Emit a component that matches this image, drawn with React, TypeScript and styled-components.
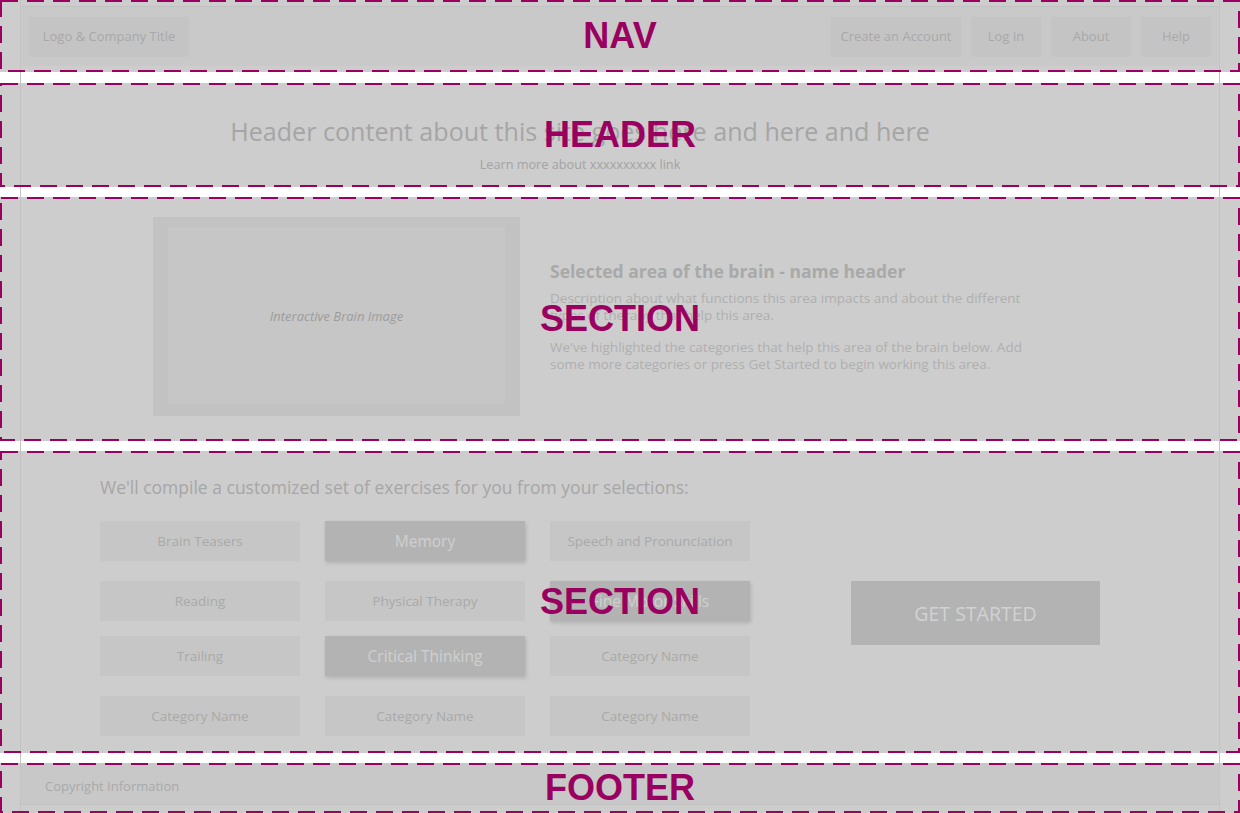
import React from 'react';
import styled, { createGlobalStyle } from 'styled-components';

const GlobalStyle = createGlobalStyle`
  html, body {
    margin: 0;
    padding: 0;
    background: #ffffff;
  }
  body {
    font-family: 'Open Sans', 'Noto Sans', sans-serif;
  }
`;

const Page = styled.div`
  position: relative;
  width: 1240px;
  height: 813px;
  overflow: hidden;
  display: flex;
  flex-direction: column;
  background: #ffffff;

  /* wireframe guide lines of the 1200px container */
  &::after {
    content: '';
    position: absolute;
    top: 0;
    bottom: 0;
    left: 20px;
    right: 20px;
    border-left: 1px solid #c3c3c3;
    border-right: 1px solid #c3c3c3;
    pointer-events: none;
    z-index: 2;
  }
`;

const Region = styled.section<{ $height: number; $gap?: number }>`
  position: relative;
  box-sizing: border-box;
  flex: 0 0 auto;
  height: ${(p) => p.$height}px;
  margin-bottom: ${(p) => p.$gap ?? 0}px;
  background: #cdcdcd;
`;

const Overlay = styled.div`
  position: absolute;
  inset: 0;
  display: flex;
  align-items: center;
  justify-content: center;
  pointer-events: none;
  z-index: 3;
`;

const Dashes = styled.svg`
  position: absolute;
  inset: 0;
`;

const Label = styled.span`
  position: relative;
  font-family: 'Liberation Sans', Arial, sans-serif;
  font-weight: 700;
  font-size: 36px;
  color: #9a0060;
`;

type AnnotationProps = {
  label: string;
  height: number;
};

const Annotation: React.FC<AnnotationProps> = ({ label, height }) => (
  <Overlay>
    <Dashes width={1240} height={height}>
      <rect
        x={1}
        y={1}
        width={1238}
        height={height - 2}
        fill="none"
        stroke="#9a0060"
        strokeWidth={2}
        strokeDasharray="17 9"
      />
    </Dashes>
    <Label>{label}</Label>
  </Overlay>
);

/* NAV */

const NavBar = styled.nav`
  box-sizing: border-box;
  height: 60px;
  margin: 6px 20px 0;
  padding: 9px 9px;
  border-top: 1px solid #c1c1c1;
  background: #c9c9c9;
  display: flex;
  align-items: center;
`;

const NavLinks = styled.div`
  margin-left: auto;
  display: flex;
  gap: 10px;
`;

const NavItem = styled.a<{ $w: number }>`
  box-sizing: border-box;
  width: ${(p) => p.$w}px;
  height: 40px;
  padding-bottom: 2px;
  display: flex;
  align-items: center;
  justify-content: center;
  background: #c4c4c4;
  color: #a8a8a8;
  font-size: 13px;
  text-decoration: none;
`;

/* HEADER */

const HeaderBody = styled.div`
  height: 100%;
  box-sizing: border-box;
  padding: 32px 80px 0 0;
  display: flex;
  flex-direction: column;
  align-items: center;
`;

const HeaderTitle = styled.h1`
  margin: 0;
  font-size: 25.1px;
  line-height: 32px;
  font-weight: 400;
  color: #a5a5a5;
`;

const HeaderLink = styled.a`
  margin-top: 9px;
  font-size: 12.7px;
  line-height: 16px;
  color: #a3a3a3;
  text-decoration: none;
`;

/* BRAIN SECTION */

const BrainBody = styled.div`
  height: 100%;
  box-sizing: border-box;
  padding: 0 0 5px 153px;
  display: flex;
  align-items: center;
`;

const ImageFrame = styled.div`
  box-sizing: border-box;
  width: 367px;
  height: 199px;
  padding: 10px 15px 12px;
  background: #c2c2c2;
  display: flex;
`;

const ImageInner = styled.div`
  flex: 1;
  display: flex;
  align-items: center;
  justify-content: center;
  background: #c6c6c6;
  color: #9c9c9c;
  font-size: 13px;
  font-style: italic;
`;

const AreaText = styled.div`
  width: 490px;
  margin-left: 30px;
`;

const AreaTitle = styled.h2`
  margin: 0;
  font-size: 17.5px;
  line-height: 22px;
  font-weight: 700;
  color: #a9a9a9;
`;

const AreaPara = styled.p<{ $top: number }>`
  margin: ${(p) => p.$top}px 0 0;
  font-size: 13.5px;
  line-height: 17px;
  color: #afafaf;
`;

/* CATEGORIES SECTION */

const CategoriesBody = styled.div`
  padding: 25px 0 0 100px;
`;

const Prompt = styled.h3`
  margin: 0;
  font-size: 17.5px;
  line-height: 22px;
  font-weight: 400;
  color: #a6a6a6;
`;

const Picker = styled.div`
  margin-top: 23px;
  display: flex;
  align-items: flex-start;
`;

const Grid = styled.div`
  display: flex;
  flex-direction: column;
`;

const GridRow = styled.div<{ $top: number }>`
  margin-top: ${(p) => p.$top}px;
  display: grid;
  grid-template-columns: 200px 200px 200px;
  column-gap: 25px;
`;

const Category = styled.button<{ $active?: boolean }>`
  height: 40px;
  border: none;
  padding: 0;
  font-family: inherit;
  cursor: pointer;
  background: ${(p) => (p.$active ? '#b3b3b3' : '#c6c6c6')};
  color: ${(p) => (p.$active ? '#d0d0d0' : '#a9a9a9')};
  font-size: ${(p) => (p.$active ? '15.5px' : '13.5px')};
  box-shadow: ${(p) => (p.$active ? '1px 2px 4px rgba(0, 0, 0, 0.14)' : 'none')};
`;

const StartButton = styled.button`
  width: 249px;
  height: 64px;
  margin: 60px 0 0 101px;
  border: none;
  padding: 0;
  font-family: inherit;
  font-size: 19.5px;
  background: #b3b3b3;
  color: #d2d2d2;
  cursor: pointer;
`;

/* FOOTER */

const FooterBar = styled.footer`
  box-sizing: border-box;
  height: 42px;
  margin: 0 20px;
  padding: 5px 0 0 25px;
  border-bottom: 1px solid #c1c1c1;
  background: #c8c8c8;
  display: flex;
  align-items: center;
  color: #a9a9a9;
  font-size: 13px;
`;

type Cat = { name: string; active?: boolean };

const rows: { top: number; items: Cat[] }[] = [
  {
    top: 0,
    items: [
      { name: 'Brain Teasers' },
      { name: 'Memory', active: true },
      { name: 'Speech and Pronunciation' },
    ],
  },
  {
    top: 20,
    items: [
      { name: 'Reading' },
      { name: 'Physical Therapy' },
      { name: 'Fine Motor Skills', active: true },
    ],
  },
  {
    top: 15,
    items: [
      { name: 'Trailing' },
      { name: 'Critical Thinking', active: true },
      { name: 'Category Name' },
    ],
  },
  {
    top: 20,
    items: [
      { name: 'Category Name' },
      { name: 'Category Name' },
      { name: 'Category Name' },
    ],
  },
];

const App: React.FC = () => {
  return (
    <>
      <GlobalStyle />
      <Page>
        <Region $height={72} $gap={11}>
          <NavBar>
            <NavItem $w={160}>Logo &amp; Company Title</NavItem>
            <NavLinks>
              <NavItem $w={130}>Create an Account</NavItem>
              <NavItem $w={70}>Log In</NavItem>
              <NavItem $w={80}>About</NavItem>
              <NavItem $w={70}>Help</NavItem>
            </NavLinks>
          </NavBar>
          <Annotation label="NAV" height={72} />
        </Region>

        <Region $height={104} $gap={10}>
          <HeaderBody>
            <HeaderTitle>Header content about this site goes here and here and here</HeaderTitle>
            <HeaderLink>Learn more about xxxxxxxxxx link</HeaderLink>
          </HeaderBody>
          <Annotation label="HEADER" height={104} />
        </Region>

        <Region $height={244} $gap={10}>
          <BrainBody>
            <ImageFrame>
              <ImageInner>Interactive Brain Image</ImageInner>
            </ImageFrame>
            <AreaText>
              <AreaTitle>Selected area of the brain - name header</AreaTitle>
              <AreaPara $top={8}>
                Description about what functions this area impacts and about the different
                types of therapy that help this area.
              </AreaPara>
              <AreaPara $top={15}>
                We've highlighted the categories that help this area of the brain below. Add
                some more categories or press Get Started to begin working this area.
              </AreaPara>
            </AreaText>
          </BrainBody>
          <Annotation label="SECTION" height={244} />
        </Region>

        <Region $height={302} $gap={10}>
          <CategoriesBody>
            <Prompt>We'll compile a customized set of exercises for you from your selections:</Prompt>
            <Picker>
              <Grid>
                {rows.map((row, i) => (
                  <GridRow key={i} $top={row.top}>
                    {row.items.map((c, j) => (
                      <Category key={j} $active={c.active}>
                        {c.name}
                      </Category>
                    ))}
                  </GridRow>
                ))}
              </Grid>
              <StartButton>GET STARTED</StartButton>
            </Picker>
          </CategoriesBody>
          <Annotation label="SECTION" height={302} />
        </Region>

        <Region $height={50}>
          <FooterBar>Copyright Information</FooterBar>
          <Annotation label="FOOTER" height={50} />
        </Region>
      </Page>
    </>
  );
};

export default App;
